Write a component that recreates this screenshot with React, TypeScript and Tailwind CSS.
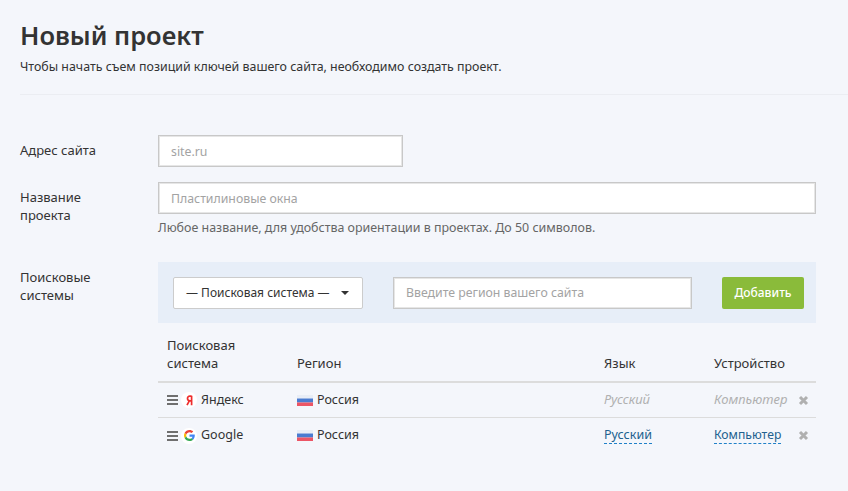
import React from "react";

const Flag = () => (
  <svg width="16" height="11" viewBox="0 0 16 11" className="shrink-0">
    <rect width="16" height="3.5" fill="#e8edf6" />
    <rect y="3.5" width="16" height="4" fill="#4a7bd0" />
    <rect y="7.5" width="16" height="3.5" fill="#ec5565" />
  </svg>
);

const Burger = () => (
  <span className="flex w-[11px] shrink-0 flex-col gap-[2px]">
    <span className="block h-[2px] bg-[#6f6f6f]" />
    <span className="block h-[2px] bg-[#6f6f6f]" />
    <span className="block h-[2px] bg-[#6f6f6f]" />
  </span>
);

const Yandex = () => (
  <span className="flex h-[16px] w-[16px] items-center justify-center rounded-full bg-white">
    <svg width="7" height="11" viewBox="0 0 7 11">
      <path d="M5.6 0.8V10.2M5.6 1.2H3.9C2.3 1.2 1.5 2.2 1.5 3.5C1.5 4.8 2.3 5.8 3.9 5.8H5.6M3.3 5.8L1 10.2" fill="none" stroke="#ee2d2d" strokeWidth="1.7" />
    </svg>
  </span>
);

const Google = () => (
  <span className="flex h-[16px] w-[16px] items-center justify-center rounded-full bg-white">
    <svg width="11" height="11" viewBox="0 0 48 48">
      <path fill="#EA4335" d="M24 9.5c3.5 0 6.7 1.2 9.2 3.6l6.9-6.9C35.9 2.4 30.5 0 24 0 14.6 0 6.5 5.4 2.6 13.2l8 6.2C12.5 13.7 17.8 9.5 24 9.5z" />
      <path fill="#4285F4" d="M47 24.5c0-1.6-.1-3.1-.4-4.5H24v9h12.9c-.6 3-2.2 5.5-4.7 7.2l7.7 6C44.4 38.1 47 31.9 47 24.5z" />
      <path fill="#FBBC05" d="M10.5 28.6c-.5-1.4-.8-3-.8-4.6s.3-3.2.8-4.6l-8-6.2C.9 16.5 0 20.1 0 24s.9 7.5 2.6 10.8l7.9-6.2z" />
      <path fill="#34A853" d="M24 48c6.5 0 11.9-2.1 15.9-5.8l-7.7-6c-2.2 1.4-4.9 2.3-8.2 2.3-6.2 0-11.5-4.2-13.4-9.900l-8 6.200C6.500 42.600 14.600 48 24 48z" />
    </svg>
  </span>
);

const Cross = () => (
  <svg width="11" height="11" viewBox="0 0 11 11" className="shrink-0">
    <path d="M2 2L9 9M9 2L2 9" stroke="#b0b0b0" strokeWidth="3" />
  </svg>
);

const inputCls =
  "h-[32px] border border-[#c8c8c8] bg-white px-[12px] text-[12.3px] text-[#333] shadow-[inset_0_0_0_1px_#e6e6e6] outline-none placeholder:text-[#a3a3a3]";

function Row({ icon, name, active }: { icon: React.ReactNode; name: string; active: boolean }) {
  return (
    <div className="flex h-[35px] items-center border-b border-[#dcdcdc] text-[12.5px] text-[#333] last:border-b-0">
      <div className="flex w-[139px] items-center pl-[9px]">
        <Burger />
        <span className="ml-[3px]">{icon}</span>
        <span className="ml-[4px]">{name}</span>
      </div>
      <div className="flex w-[307px] items-center gap-[4px]">
        <Flag />
        <span>Россия</span>
      </div>
      <div className="w-[110px]">
        {active ? (
          <span className="border-b border-dashed border-[#1f80c8] text-[#22618f]">Русский</span>
        ) : (
          <span className="text-[13px] italic text-[#b0b0b0]">Русский</span>
        )}
      </div>
      <div className="w-[84px]">
        {active ? (
          <span className="border-b border-dashed border-[#1f80c8] text-[12.2px] text-[#22618f]">Компьютер</span>
        ) : (
          <span className="text-[13px] italic text-[#b0b0b0]">Компьютер</span>
        )}
      </div>
      <Cross />
    </div>
  );
}

export default function App() {
  return (
    <div className="h-[491px] w-[848px] overflow-hidden bg-[#f4f6fb] pl-[20px] font-['Noto_Sans','Open_Sans',sans-serif] text-[#333]">
      <h1 className="pt-[17px] text-[25.5px] font-semibold leading-[36px] text-[#333]">Новый проект</h1>
      <p className="mt-[5px] text-[12.4px] leading-[18px] text-[#333]">
        Чтобы начать съем позиций ключей вашего сайта, необходимо создать проект.
      </p>
      <div className="mt-[18px] border-b border-[#ebedf2]" />

      <div className="w-[796px] pt-[40px]">
        <div className="flex items-start">
          <label className="w-[138px] pt-[6px] text-[13px] leading-[18px]">Адрес сайта</label>
          <input className={`${inputCls} w-[245px]`} placeholder="site.ru" />
        </div>

        <div className="mt-[15px] flex items-start">
          <label className="w-[138px] pt-[6px] text-[13px] leading-[18px]">
            Название
            <br />
            проекта
          </label>
          <div className="flex-1">
            <input className={`${inputCls} w-full`} placeholder="Пластилиновые окна" />
            <p className="mt-[5px] text-[12.45px] leading-[18px] text-[#666]">
              Любое название, для удобства ориентации в проектах. До 50 символов.
            </p>
          </div>
        </div>

        <div className="mt-[25px] flex items-start">
          <label className="w-[138px] pt-[6px] text-[13px] leading-[18px]">
            Поисковые
            <br />
            системы
          </label>
          <div className="flex-1">
            <div className="flex h-[61px] items-center bg-[#e7eef8] pl-[15px] pr-[12px]">
              <button className="flex h-[32px] w-[190px] items-center justify-between rounded-[2px] border border-[#cccccc] bg-white pl-[12px] pr-[13px] text-[12px] text-[#333]">
                <span className="whitespace-nowrap">— Поисковая система —</span>
                <span className="h-0 w-0 border-x-[4px] border-t-[4px] border-x-transparent border-t-[#333]" />
              </button>
              <input className={`${inputCls} ml-[30px] w-[299px]`} placeholder="Введите регион вашего сайта" />
              <button className="ml-[30px] h-[32px] w-[82px] rounded-[2px] bg-[#8abb3a] text-[12px] font-medium text-white">
                Добавить
              </button>
            </div>

            <div className="flex h-[60px] items-end border-b-2 border-[#dcdcdc] pb-[9px] text-[13px] leading-[18px] text-[#333]">
              <div className="w-[139px] pl-[9px]">
                Поисковая
                <br />
                система
              </div>
              <div className="w-[307px]">Регион</div>
              <div className="w-[110px]">Язык</div>
              <div>Устройство</div>
            </div>

            <Row icon={<Yandex />} name="Яндекс" active={false} />
            <Row icon={<Google />} name="Google" active={true} />
          </div>
        </div>
      </div>
    </div>
  );
}
